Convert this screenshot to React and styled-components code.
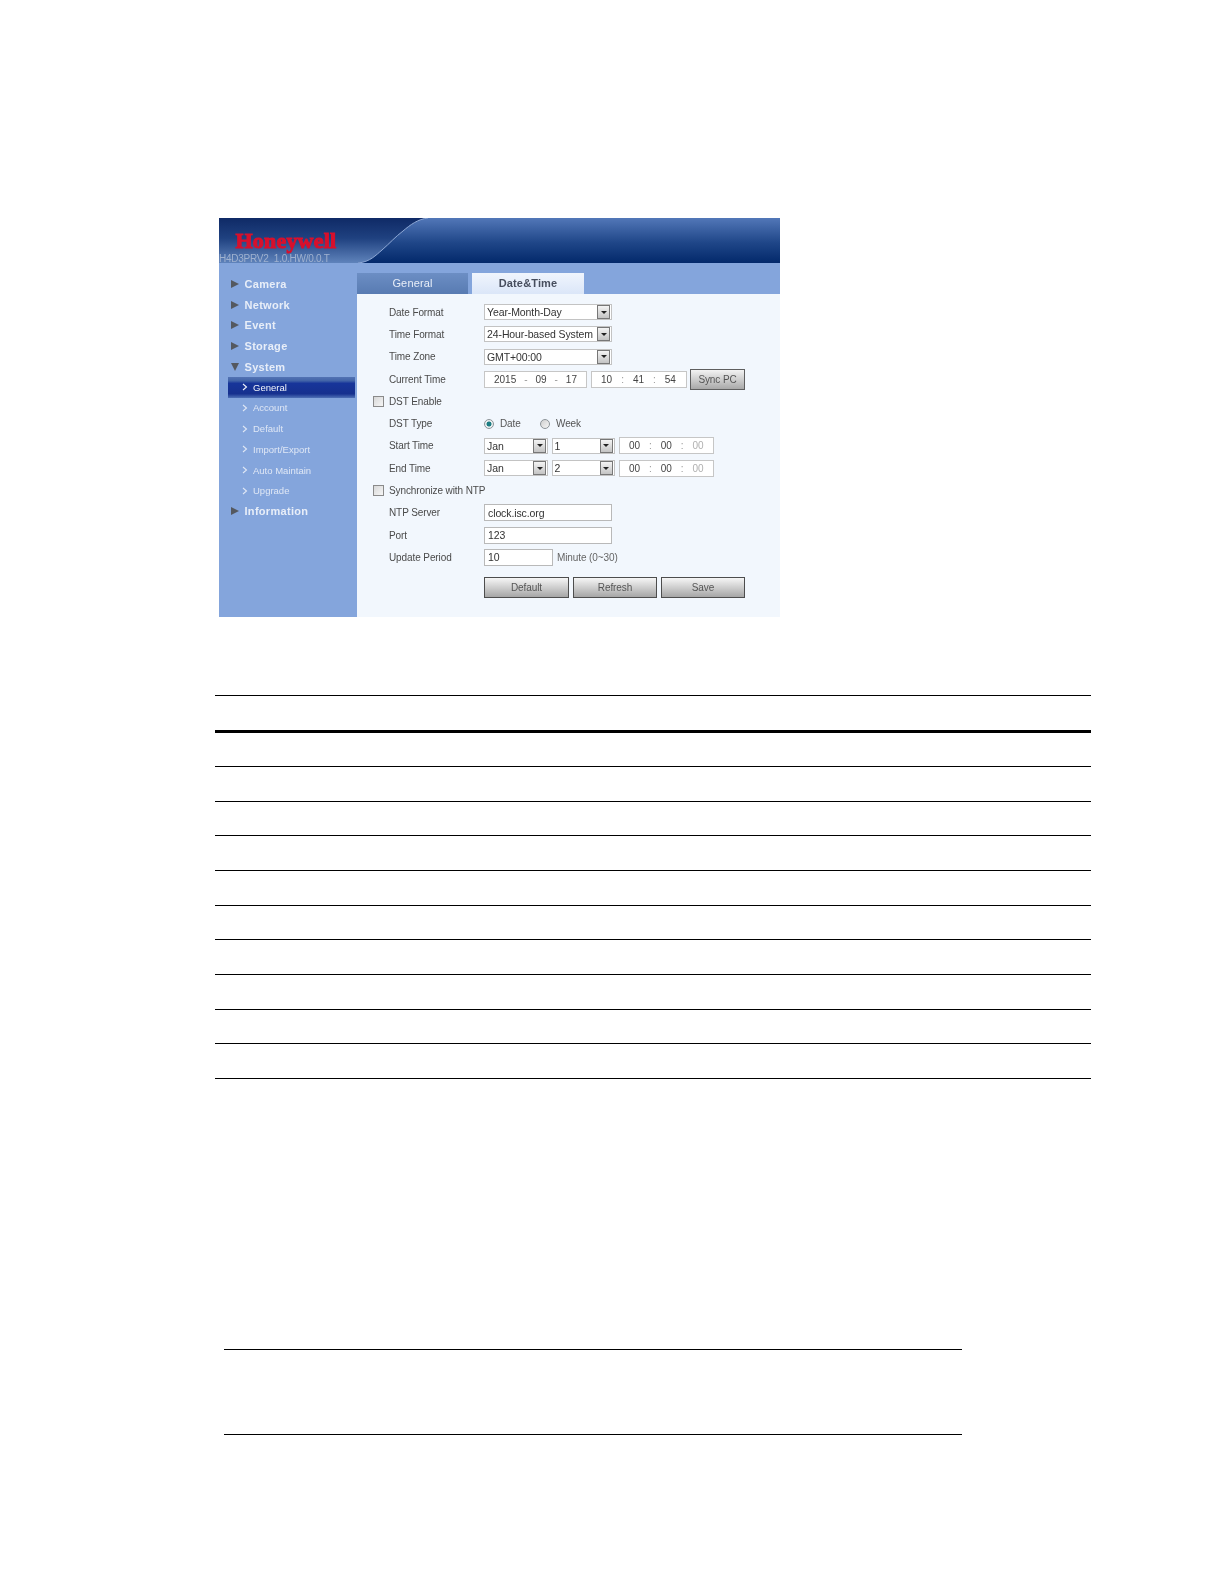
import React from "react";
import styled, { createGlobalStyle } from "styled-components";

const GlobalStyle = createGlobalStyle`
  html, body {
    margin: 0;
    padding: 0;
    background: #fff;
  }
  body {
    font-family: "Liberation Sans", Arial, sans-serif;
  }
`;

const menuTop = ["Camera", "Network", "Event", "Storage"];
const subMenu = ["General", "Account", "Default", "Import/Export", "Auto Maintain", "Upgrade"];

const App = () => {
  return (
    <Page>
      <GlobalStyle />
      <Panel>
        <Header>
          <Swoosh viewBox="0 0 422 45" preserveAspectRatio="none">
            <defs>
              <linearGradient id="swooshFill" x1="0" y1="0" x2="0" y2="1">
                <stop offset="0" stopColor="#5277b8" />
                <stop offset="0.55" stopColor="#1f4688" />
                <stop offset="1" stopColor="#03296b" />
              </linearGradient>
            </defs>
            <path d="M0 45 C12 44 18 37 24 32 C32 25 37 19 45 13 C52 7 60 1 70 0 L422 0 L422 45 Z" fill="url(#swooshFill)" />
            <path d="M0 45 C12 44 18 37 24 32 C32 25 37 19 45 13 C52 7 60 1 70 0" fill="none" stroke="#8fa9d6" strokeWidth="1" />
          </Swoosh>
          <Logo>Honeywell</Logo>
          <Version>H4D3PRV2_1.0.HW/0.0.T</Version>
        </Header>
        <Body>
          <Sidebar>
            {menuTop.map((item) => (
              <MenuItem key={item}>
                <ArrowRight />
                {item}
              </MenuItem>
            ))}
            <MenuItem>
              <ArrowDown />
              System
            </MenuItem>
            {subMenu.map((item, index) => (
              <SubItem key={item} $active={index === 0}>
                <Chevron viewBox="0 0 6 8">
                  <path d="M1 1 L4.5 4 L1 7" fill="none" stroke="currentColor" strokeWidth="1.1" />
                </Chevron>
                {item}
              </SubItem>
            ))}
            <MenuItem>
              <ArrowRight />
              Information
            </MenuItem>
          </Sidebar>
          <Main>
            <TabBar>
              <Tab>General</Tab>
              <Tab $active>Date&amp;Time</Tab>
            </TabBar>
            <Form>
              <Row>
                <Label>Date Format</Label>
                <Select $width={128}>Year-Month-Day<SelectArrow /></Select>
              </Row>
              <Row>
                <Label>Time Format</Label>
                <Select $width={128}>24-Hour-based System<SelectArrow /></Select>
              </Row>
              <Row>
                <Label>Time Zone</Label>
                <Select $width={128}>GMT+00:00<SelectArrow /></Select>
              </Row>
              <Row>
                <Label>Current Time</Label>
                <Field $width={103}>
                  <Part>2015</Part><Sep>-</Sep><Part>09</Part><Sep>-</Sep><Part>17</Part>
                </Field>
                <Field $width={96} $gap={3.5}>
                  <Part>10</Part><Sep>:</Sep><Part>41</Part><Sep>:</Sep><Part>54</Part>
                </Field>
                <SyncButton>Sync PC</SyncButton>
              </Row>
              <CheckRow>
                <Checkbox />
                DST Enable
              </CheckRow>
              <Row>
                <Label>DST Type</Label>
                <Radio $checked />
                <RadioText>Date</RadioText>
                <Radio />
                <RadioText>Week</RadioText>
              </Row>
              <Row>
                <Label>Start Time</Label>
                <Select $width={64}>Jan<SelectArrow /></Select>
                <Select $width={63} $gap={3.5}>1<SelectArrow /></Select>
                <Field $width={95.5} $gap={4}>
                  <Part>00</Part><Sep>:</Sep><Part>00</Part><Sep>:</Sep><Part $dim>00</Part>
                </Field>
              </Row>
              <Row>
                <Label>End Time</Label>
                <Select $width={64}>Jan<SelectArrow /></Select>
                <Select $width={63} $gap={3.5}>2<SelectArrow /></Select>
                <Field $width={95.5} $gap={4}>
                  <Part>00</Part><Sep>:</Sep><Part>00</Part><Sep>:</Sep><Part $dim>00</Part>
                </Field>
              </Row>
              <CheckRow>
                <Checkbox />
                Synchronize with NTP
              </CheckRow>
              <Row>
                <Label>NTP Server</Label>
                <TextBox $width={128}>clock.isc.org</TextBox>
              </Row>
              <Row>
                <Label>Port</Label>
                <TextBox $width={128}>123</TextBox>
              </Row>
              <Row>
                <Label>Update Period</Label>
                <TextBox $width={69}>10</TextBox>
                <Hint>Minute (0~30)</Hint>
              </Row>
              <Actions>
                <ActionButton $width={85}>Default</ActionButton>
                <ActionButton $width={84}>Refresh</ActionButton>
                <ActionButton $width={84}>Save</ActionButton>
              </Actions>
            </Form>
          </Main>
        </Body>
      </Panel>

      <RuleTable>
        <HeadRow />
        {Array.from({ length: 10 }).map((_, index) => (
          <TableRow key={index} />
        ))}
      </RuleTable>

      <NoteBox />
    </Page>
  );
};

const Page = styled.div`
  width: 1224px;
  height: 1584px;
  padding-top: 218px;
  box-sizing: border-box;
  overflow: hidden;
  background: #fff;
`;

const Panel = styled.div`
  width: 561px;
  height: 399px;
  margin-left: 219px;
  display: flex;
  flex-direction: column;
  filter: blur(0.45px);
`;

const Header = styled.div`
  position: relative;
  height: 45px;
  flex: none;
  overflow: hidden;
  background: linear-gradient(#0f2a66 0%, #1f4180 45%, #5f83bb 100%);
`;

const Swoosh = styled.svg`
  position: absolute;
  left: 139px;
  top: 0;
  width: 422px;
  height: 45px;
`;

const Logo = styled.div`
  position: absolute;
  left: 16.5px;
  top: 11px;
  font-family: "Liberation Serif", serif;
  font-weight: 700;
  font-size: 22px;
  line-height: 24px;
  letter-spacing: 0.2px;
  color: #d8102c;
  -webkit-text-stroke: 1px #d8102c;
`;

const Version = styled.div`
  position: absolute;
  left: 0;
  top: 34px;
  font-size: 10px;
  line-height: 13px;
  letter-spacing: -0.25px;
  color: #9fb1cf;
  white-space: nowrap;
`;

const Body = styled.div`
  flex: 1;
  display: flex;
  min-height: 0;
`;

const Sidebar = styled.div`
  width: 138px;
  flex: none;
  padding: 10.5px 2px 0 9px;
  box-sizing: border-box;
  background: #84a5dc;
`;

const MenuItem = styled.div`
  height: 20.7px;
  display: flex;
  align-items: center;
  padding-left: 3px;
  font-size: 11px;
  font-weight: 700;
  letter-spacing: 0.3px;
  color: #e8eef8;
  white-space: nowrap;
`;

const ArrowRight = styled.span`
  width: 0;
  height: 0;
  margin-right: 5.5px;
  border-style: solid;
  border-width: 4.5px 0 4.5px 8px;
  border-color: transparent transparent transparent #54585f;
`;

const ArrowDown = styled.span`
  width: 0;
  height: 0;
  margin-right: 5.5px;
  border-style: solid;
  border-width: 8px 4.5px 0 4.5px;
  border-color: #54585f transparent transparent transparent;
`;

const SubItem = styled.div`
  height: 20.7px;
  display: flex;
  align-items: center;
  padding-left: 14px;
  font-size: 9.5px;
  white-space: nowrap;
  color: ${(p) => (p.$active ? "#f2f5fb" : "#dfe7f5")};
  background: ${(p) =>
    p.$active
      ? "linear-gradient(#5373b4 0%, #4264a8 18%, #17359a 30%, #16308e 80%, #4f71b6 100%)"
      : "transparent"};
`;

const Chevron = styled.svg`
  width: 6px;
  height: 8px;
  margin-right: 5px;
  flex: none;
`;

const Main = styled.div`
  flex: 1;
  display: flex;
  flex-direction: column;
  min-width: 0;
`;

const TabBar = styled.div`
  height: 30.5px;
  flex: none;
  display: flex;
  align-items: flex-end;
  gap: 4px;
  background: #84a5dc;
`;

const Tab = styled.div`
  width: ${(p) => (p.$active ? "112px" : "111px")};
  height: 20.5px;
  display: flex;
  align-items: center;
  justify-content: center;
  font-size: 11px;
  letter-spacing: 0.15px;
  font-weight: ${(p) => (p.$active ? 700 : 400)};
  color: ${(p) => (p.$active ? "#474e5e" : "#e8eef8")};
  background: ${(p) =>
    p.$active ? "linear-gradient(#f0f5fd, #dbe6f8)" : "linear-gradient(#6c8ec4, #587bb2)"};
`;

const Form = styled.div`
  flex: 1;
  padding-top: 7.5px;
  background: #f2f7fd;
  font-size: 10px;
  letter-spacing: -0.1px;
  color: #4a4a4a;
`;

const Row = styled.div`
  height: 22.3px;
  display: flex;
  align-items: center;
  padding-left: 32px;
`;

const CheckRow = styled(Row)`
  padding-left: 16px;
`;

const Label = styled.div`
  width: 95px;
  flex: none;
  white-space: nowrap;
`;

const Checkbox = styled.span`
  width: 9px;
  height: 9px;
  margin-right: 5px;
  flex: none;
  border: 1px solid #8a8a8a;
  background: linear-gradient(135deg, #d8d8d8, #f6f6f6);
`;

const Radio = styled.span`
  width: 10px;
  height: 10px;
  flex: none;
  box-sizing: border-box;
  border-radius: 50%;
  border: 1px solid #8d9499;
  background: ${(p) =>
    p.$checked
      ? "radial-gradient(circle, #1c7d83 0 2.2px, #e8eeee 2.8px)"
      : "linear-gradient(135deg, #cfcfcf, #f6f6f6)"};
`;

const RadioText = styled.span`
  width: 21px;
  margin: 0 19px 0 6px;
  color: #555;
`;

const Select = styled.div`
  width: ${(p) => p.$width}px;
  height: 16px;
  margin-left: ${(p) => p.$gap || 0}px;
  flex: none;
  box-sizing: border-box;
  display: flex;
  align-items: center;
  justify-content: space-between;
  padding: 0 1px 0 2px;
  border: 1px solid #c3c3c3;
  background: #fff;
  font-size: 10.5px;
  letter-spacing: -0.1px;
  color: #333;
  white-space: nowrap;
`;

const SelectArrow = styled.span`
  position: relative;
  width: 13px;
  height: 14px;
  flex: none;
  box-sizing: border-box;
  border: 1px solid #777;
  background: linear-gradient(#f4f4f4, #c4c4c4);

  &::after {
    content: "";
    position: absolute;
    left: 2.5px;
    top: 4.5px;
    border-style: solid;
    border-width: 3.5px 3px 0 3px;
    border-color: #222 transparent transparent transparent;
  }
`;

const Field = styled.div`
  width: ${(p) => p.$width}px;
  height: 17px;
  margin-left: ${(p) => p.$gap || 0}px;
  flex: none;
  box-sizing: border-box;
  display: flex;
  align-items: center;
  justify-content: space-around;
  padding: 0 5px;
  border: 1px solid #c6c6c6;
  background: #fff;
  letter-spacing: 0;
`;

const Part = styled.span`
  color: ${(p) => (p.$dim ? "#b0b0b0" : "#444")};
`;

const Sep = styled.span`
  color: #999;
`;

const SyncButton = styled.div`
  width: 55px;
  height: 21px;
  margin-left: 3.5px;
  flex: none;
  box-sizing: border-box;
  display: flex;
  align-items: center;
  justify-content: center;
  border: 1px solid #5f5f5f;
  background: linear-gradient(#f3f3f3, #a9a9a9);
  color: #555;
  white-space: nowrap;
`;

const TextBox = styled.div`
  width: ${(p) => p.$width}px;
  height: 17px;
  flex: none;
  box-sizing: border-box;
  display: flex;
  align-items: center;
  padding-left: 3px;
  border: 1px solid #b9b9b9;
  background: #fff;
  font-size: 10.5px;
  color: #333;
`;

const Hint = styled.span`
  margin-left: 4px;
  color: #666;
  white-space: nowrap;
`;

const Actions = styled.div`
  display: flex;
  gap: 4px;
  margin-top: 8.5px;
  padding-left: 127px;
`;

const ActionButton = styled.div`
  width: ${(p) => p.$width}px;
  height: 21px;
  box-sizing: border-box;
  display: flex;
  align-items: center;
  justify-content: center;
  border: 1px solid #4d4d4d;
  background: linear-gradient(#f6f6f6, #a6a6a6);
  color: #555;
`;

const RuleTable = styled.div`
  width: 876px;
  margin: 78px 0 0 215px;
  border-top: 1px solid #000;
`;

const HeadRow = styled.div`
  height: 36.6px;
  box-sizing: border-box;
  border-bottom: 3px solid #000;
`;

const TableRow = styled.div`
  height: 34.64px;
  box-sizing: border-box;
  border-bottom: 1px solid #000;
`;

const NoteBox = styled.div`
  width: 738px;
  height: 86.5px;
  margin: 270px 0 0 224px;
  box-sizing: border-box;
  border-top: 1px solid #000;
  border-bottom: 1px solid #000;
`;

export default App;
